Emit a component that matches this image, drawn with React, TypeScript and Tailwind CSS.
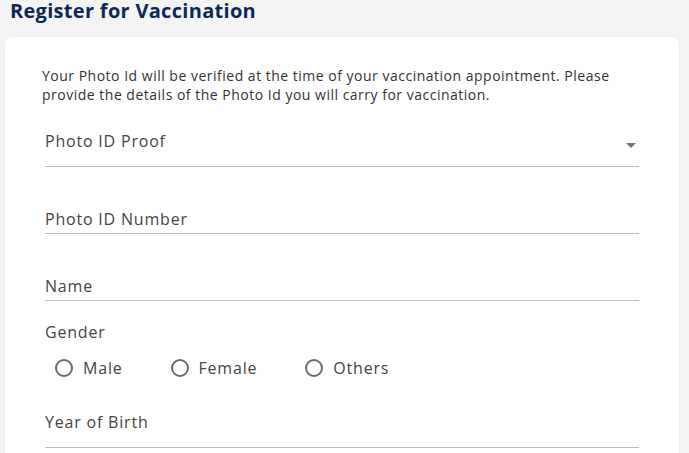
import React from "react";

function Radio({ label }: { label: string }) {
  return (
    <label className="flex items-center gap-[10px] cursor-pointer">
      <span className="w-[18px] h-[18px] rounded-full border-2 border-[#6b6b6b] bg-white" />
      <span>{label}</span>
    </label>
  );
}

export default function App() {
  return (
    <div
      className="min-h-screen bg-[#f4f4f4] text-[#444]"
      style={{ fontFamily: '"Open Sans", "Liberation Sans", sans-serif' }}>
      <h1 className="pl-[10px] h-[37px] text-[20px] leading-[22px] font-bold tracking-[0.3px] text-[#0c2957]">
        Register for Vaccination
      </h1>
      <div className="ml-[5px] mr-[10px] bg-white rounded-lg shadow-[0_0_2px_rgba(0,0,0,0.06)] pt-[29px] pb-6">
        <p className="pl-[37px] pr-[40px] text-[14px] leading-[19px] tracking-[0.5px] text-[#333]">
          Your Photo Id will be verified at the time of your vaccination appointment. Please
          provide the details of the Photo Id you will carry for vaccination.
        </p>
        <div className="px-[40px] mt-[25px] text-[16px] font-medium tracking-[0.8px]">
          <div className="relative h-[38px] border-b border-[#bdbdbd]">
            <div className="leading-[24px]">Photo ID Proof</div>
            <span className="absolute right-[3px] top-[14px] w-0 h-0 border-l-[5px] border-r-[5px] border-t-[5px] border-l-transparent border-r-transparent border-t-[#757575]" />
          </div>
          <div className="mt-[40px] h-[27px] border-b border-[#bdbdbd] leading-[24px]">
            Photo ID Number
          </div>
          <div className="mt-[40px] h-[27px] border-b border-[#bdbdbd] leading-[24px]">
            Name
          </div>
          <div className="mt-[19px] leading-[24px]">Gender</div>
          <div className="mt-[12px] pl-[10px] flex items-center gap-[48px] leading-[24px]">
            <Radio label="Male" />
            <Radio label="Female" />
            <Radio label="Others" />
          </div>
          <div className="mt-[30px] h-[38px] border-b border-[#bdbdbd] leading-[24px]">
            Year of Birth
          </div>
        </div>
      </div>
    </div>
  );
}
